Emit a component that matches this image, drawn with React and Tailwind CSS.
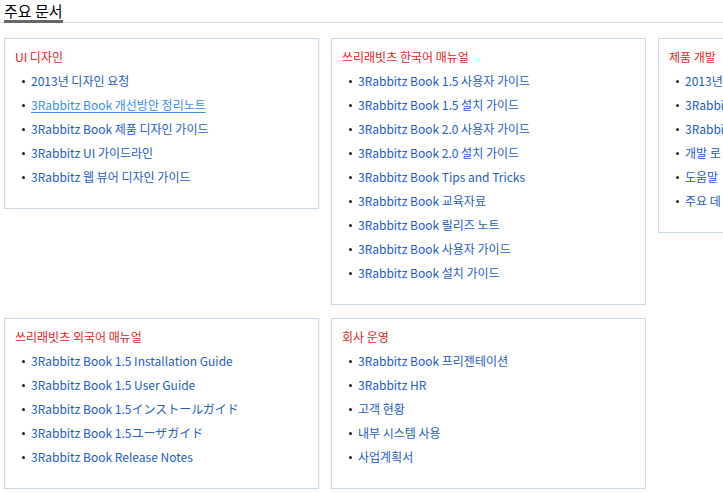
import React from 'react'

const sections = [
  {
    title: 'UI 디자인',
    items: ['2013년 디자인 요청', '3Rabbitz Book 개선방안 정리노트', '3Rabbitz Book 제품 디자인 가이드', '3Rabbitz UI 가이드라인', '3Rabbitz 웹 뷰어 디자인 가이드'],
    hover: 1,
  },
  {
    title: '쓰리래빗츠 한국어 매뉴얼',
    items: [
      '3Rabbitz Book 1.5 사용자 가이드',
      '3Rabbitz Book 1.5 설치 가이드',
      '3Rabbitz Book 2.0 사용자 가이드',
      '3Rabbitz Book 2.0 설치 가이드',
      '3Rabbitz Book Tips and Tricks',
      '3Rabbitz Book 교육자료',
      '3Rabbitz Book 릴리즈 노트',
      '3Rabbitz Book 사용자 가이드',
      '3Rabbitz Book 설치 가이드',
    ],
  },
  {
    title: '제품 개발',
    items: ['2013년', '3Rabbitz', '3Rabbitz', '개발 로', '도움말', '주요 데'],
  },
  {
    title: '쓰리래빗츠 외국어 매뉴얼',
    items: [
      '3Rabbitz Book 1.5 Installation Guide',
      '3Rabbitz Book 1.5 User Guide',
      '3Rabbitz Book 1.5インストールガイド',
      '3Rabbitz Book 1.5ユーザガイド',
      '3Rabbitz Book Release Notes',
    ],
  },
  {
    title: '회사 운영',
    items: ['3Rabbitz Book 프리젠테이션', '3Rabbitz HR', '고객 현황', '내부 시스템 사용', '사업계획서'],
  },
]

function DocBox({ section }) {
  return (
    <div className="border border-[#c9d9e5] bg-white pt-[9px] pb-[19px] px-[10px] self-start">
      <h3 className="text-[12px] leading-[18px] text-[#e0261e] whitespace-nowrap">{section.title}</h3>
      <ul className="mt-[3px] pl-[7px]">
        {section.items.map((item, i) => (
          <li key={i} className="flex items-center h-[24px] whitespace-nowrap text-[12px]">
            <span className="w-[3px] h-[3px] rounded-full bg-[#222] mr-[6px] shrink-0"></span>
            <a
              href="#"
              className={i === section.hover ? 'text-[#3a8ee6] underline underline-offset-2' : 'text-[#1f5cc5]'}
            >
              {item}
            </a>
          </li>
        ))}
      </ul>
    </div>
  )
}

export default function App() {
  return (
    <div
      className="w-[723px] h-[493px] overflow-hidden bg-white"
      style={{ fontFamily: '"Noto Sans CJK KR", "Noto Sans CJK JP", sans-serif' }}
    >
      <div className="flex border-b border-[#dcdcdc] px-[4px] pt-[3px]">
        <h2 className="text-[15px] leading-[16px] text-black border-b-[3px] border-[#666] pb-[1px] mb-[-1px]">
          주요 문서
        </h2>
      </div>
      <div className="grid grid-cols-[315px_315px_315px] gap-x-[12px] gap-y-[13px] pl-[4px] pt-[15px]">
        {sections.map((s, i) => (
          <DocBox key={i} section={s} />
        ))}
      </div>
    </div>
  )
}
